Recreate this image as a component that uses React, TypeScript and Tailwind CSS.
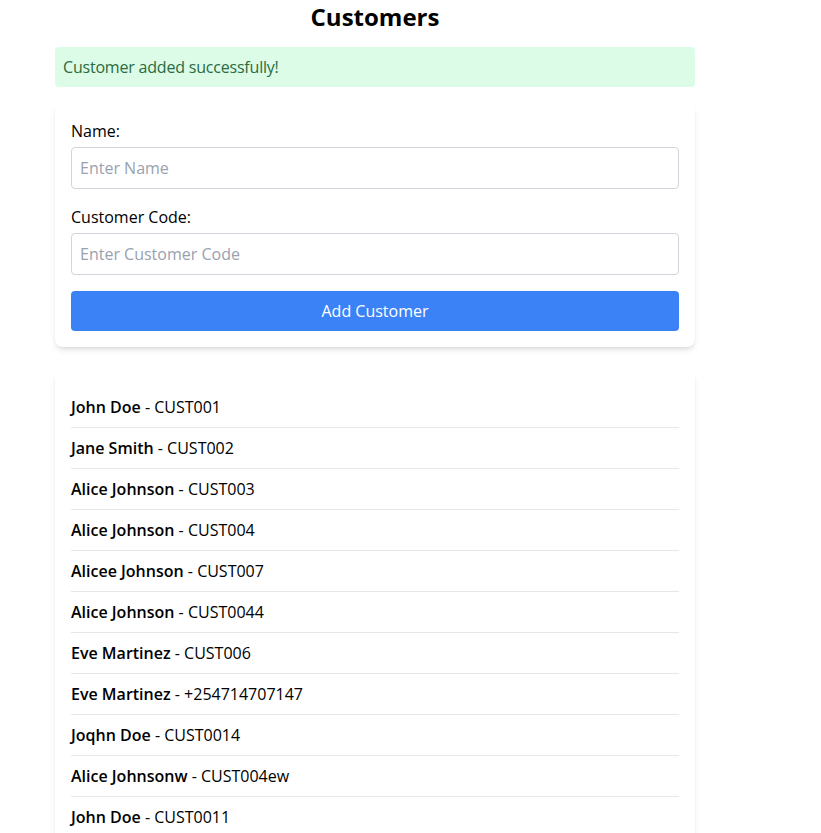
import { useState } from "react";

const CUSTOMERS = [
  { name: "John Doe", code: "CUST001" },
  { name: "Jane Smith", code: "CUST002" },
  { name: "Alice Johnson", code: "CUST003" },
  { name: "Alice Johnson", code: "CUST004" },
  { name: "Alicee Johnson", code: "CUST007" },
  { name: "Alice Johnson", code: "CUST0044" },
  { name: "Eve Martinez", code: "CUST006" },
  { name: "Eve Martinez", code: "+254714707147" },
  { name: "Joqhn Doe", code: "CUST0014" },
  { name: "Alice Johnsonw", code: "CUST004ew" },
  { name: "John Doe", code: "CUST0011" },
];

export default function App() {
  const [name, setName] = useState("");
  const [code, setCode] = useState("");

  return (
    <div className="min-h-screen bg-white text-black font-['Open_Sans',sans-serif]">
      <div className="ml-[55px] w-[640px]">
        <h1 className="mb-[14px] pt-px text-center text-2xl font-bold">Customers</h1>

        <div className="mb-4 rounded bg-[#dcfce7] px-2 py-2 tracking-[-0.2px] text-[#2a6b3f]">
          Customer added successfully!
        </div>

        <form
          className="rounded-lg bg-white p-4 shadow-md"
          onSubmit={(e) => e.preventDefault()}
        >
          <label className="mb-1 block">Name:</label>
          <input
            value={name}
            onChange={(e) => setName(e.target.value)}
            placeholder="Enter Name"
            className="mb-4 block w-full rounded border border-gray-300 px-2 py-2 placeholder:text-gray-400"
          />
          <label className="mb-1 block">Customer Code:</label>
          <input
            value={code}
            onChange={(e) => setCode(e.target.value)}
            placeholder="Enter Customer Code"
            className="mb-4 block w-full rounded border border-gray-300 px-2 py-2 placeholder:text-gray-400"
          />
          <button type="submit" className="w-full rounded bg-[#3b82f6] py-2 text-white">
            Add Customer
          </button>
        </form>

        <ul className="mt-6 rounded-lg bg-white p-4 shadow-md">
          {CUSTOMERS.map((c, i) => (
            <li key={i} className="border-b border-gray-200 py-2">
              <span className="font-semibold">{c.name}</span> - {c.code}
            </li>
          ))}
        </ul>
      </div>
    </div>
  );
}
